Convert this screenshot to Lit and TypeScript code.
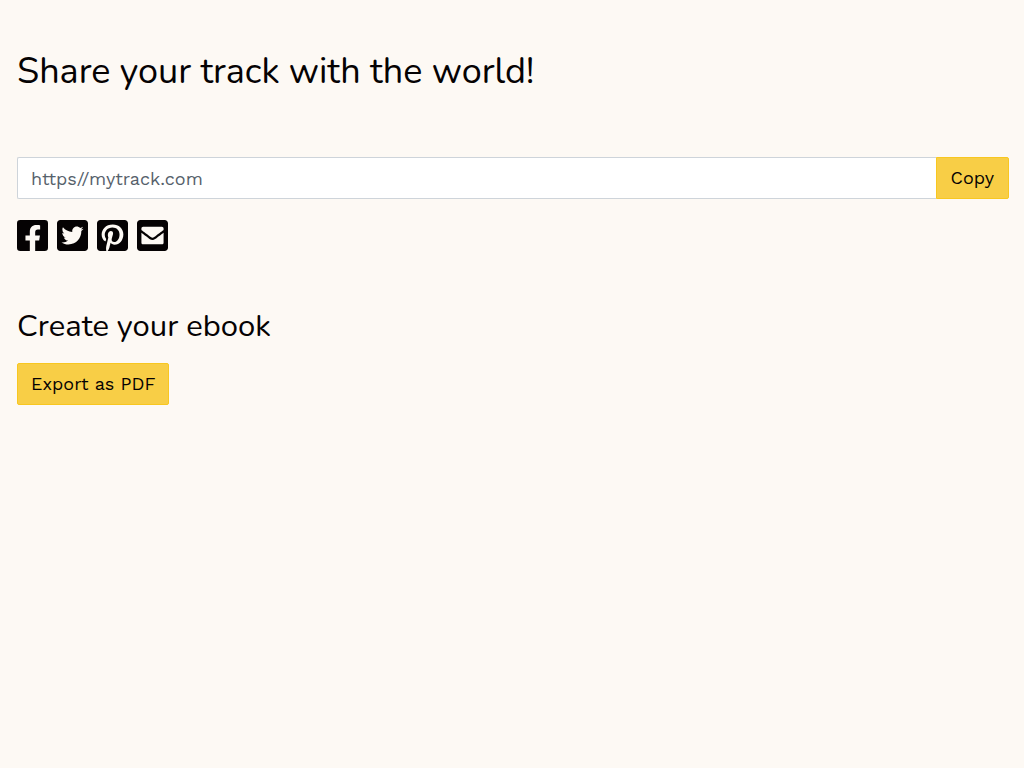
import { LitElement, html, css, svg } from "lit";
import { customElement, state } from "lit/decorators.js";

const icons = [
  {
    label: "Share on Facebook",
    path: "M400 32H48A48 48 0 0 0 0 80v352a48 48 0 0 0 48 48h137.25V327.69h-63V256h63v-54.64c0-62.15 37-96.48 93.67-96.48 27.14 0 55.52 4.84 55.52 4.84v61h-31.27c-30.81 0-40.42 19.12-40.42 38.73V256h68.78l-11 71.69h-57.78V480H400a48 48 0 0 0 48-48V80a48 48 0 0 0-48-48z",
  },
  {
    label: "Share on Twitter",
    path: "M400 32H48C21.5 32 0 53.5 0 80v352c0 26.5 21.5 48 48 48h352c26.5 0 48-21.5 48-48V80c0-26.5-21.5-48-48-48zm-48.9 158.8c.2 2.8.2 5.7.2 8.5 0 86.7-66 186.6-186.6 186.6-37.2 0-71.7-10.8-100.7-29.4 5.3.6 10.4.8 15.8.8 30.7 0 58.9-10.4 81.4-28-28.8-.6-53-19.5-61.3-45.5 10.1 1.5 19.2 1.5 29.6-1.2-30-6.1-52.5-32.5-52.5-64.4v-.8c8.7 4.9 18.9 7.9 29.6 8.3a65.447 65.447 0 0 1-29.2-54.6c0-12.2 3.2-23.4 8.9-33.1 32.3 39.8 80.8 65.8 135.2 68.6-9.3-44.5 24-80.6 64-80.6 18.9 0 35.9 7.9 47.9 20.7 14.8-2.8 29-8.3 41.6-15.8-4.9 15.2-15.2 28-28.8 36.1 13.2-1.4 26-5.1 37.8-10.2-8.9 13.1-20.1 24.7-32.9 34z",
  },
  {
    label: "Share on Pinterest",
    path: "M448 80v352c0 26.500-21.500 48-48 48H154.400c9.800-16.400 22.400-40 27.400-59.300 3-11.500 15.300-58.400 15.300-58.400 8 15.300 31.400 28.200 56.300 28.200 74.100 0 127.400-68.100 127.400-152.700 0-81.100-66.200-141.800-151.400-141.800-106 0-162.200 71.100-162.200 148.600 0 36 19.200 80.800 49.800 95.100 4.700 2.200 7.100 1.200 8.200-3.300.8-3.400 5-20.100 6.800-27.800.6-2.500.3-4.600-1.700-7-10.100-12.300-18.300-34.900-18.300-56 0-54.200 41-106.600 110.900-106.600 60.300 0 102.600 41.100 102.600 99.900 0 66.400-33.500 112.400-77.200 112.400-24.100 0-42.100-19.900-36.400-44.400 6.900-29.200 20.300-60.700 20.300-81.800 0-53-75.500-45.700-75.500 25 0 21.700 7.300 36.500 7.300 36.500-31.400 132.800-36.100 134.500-29.600 192.600l2.200.8H48c-26.500 0-48-21.500-48-48V80c0-26.500 21.500-48 48-48h352c26.500 0 48 21.500 48 48z",
  },
  {
    label: "Share by email",
    path: "M400 32H48C21.490 32 0 53.490 0 80v352c0 26.510 21.490 48 48 48h352c26.510 0 48-21.490 48-48V80c0-26.510-21.490-48-48-48zM178.117 262.104C87.429 196.287 88.353 196.121 64 177.167V152c0-13.255 10.745-24 24-24h272c13.255 0 24 10.745 24 24v25.167c-24.371 18.969-23.434 19.124-114.117 84.938-10.500 7.655-31.392 26.120-45.883 25.894-14.503.218-35.367-18.227-45.883-25.895zM384 217.775V360c0 13.255-10.745 24-24 24H88c-13.255 0-24-10.745-24-24V217.775c13.958 10.794 33.329 25.236 95.303 70.214 14.162 10.341 37.975 32.145 64.694 32.010 26.887.134 51.037-22.041 64.720-32.025 61.958-44.964 81.325-59.404 95.283-70.199z",
  },
];

@customElement("app-root")
export class AppRoot extends LitElement {
  @state() private url = "";

  static styles = css`
    :host {
      display: block;
      box-sizing: border-box;
      min-height: 100vh;
      padding: 50px 15px 50px 17px;
      background: #fdf9f4;
      color: #050203;
      font-family: "Work Sans", Inter, "Liberation Sans", sans-serif;
      font-size: 18px;
      line-height: 28px;
    }
    .title,
    .subtitle {
      margin: 0;
      font-family: Nunito, "Open Sans", sans-serif;
      font-weight: 400;
    }
    .title {
      font-size: 36px;
      line-height: 44px;
      margin-bottom: 63px;
    }
    .subtitle {
      font-size: 31px;
      line-height: 40px;
      margin: 55px 0 17px;
    }
    .group {
      display: flex;
    }
    .field,
    .button {
      box-sizing: border-box;
      height: 42px;
      margin: 0;
      padding: 6px 13px;
      border: 1px solid #ced4da;
      font: inherit;
    }
    .field {
      flex: 1;
      min-width: 0;
      border-right: 0;
      border-radius: 2px 0 0 2px;
      background: #fff;
      color: #495057;
    }
    .field::placeholder {
      color: #56616b;
      opacity: 1;
    }
    .button {
      border-color: #f8c720;
      border-radius: 2px;
      background: #f8ce46;
      color: #050203;
      cursor: pointer;
    }
    .copy {
      padding: 6px 14px;
      border-radius: 0 2px 2px 0;
    }
    .share {
      display: flex;
      gap: 9px;
      margin-top: 21px;
    }
    .link {
      display: block;
      color: inherit;
    }
    .icon {
      display: block;
      width: 31px;
      height: 31px;
      fill: currentColor;
    }
  `;

  private copy() {
    navigator.clipboard?.writeText(this.url);
  }

  render() {
    return html`
      <main>
        <h1 class="title">Share your track with the world!</h1>
        <div class="group">
          <input
            class="field"
            type="text"
            aria-label="Track link"
            placeholder="https//mytrack.com"
            .value=${this.url}
            @input=${(e: Event) => (this.url = (e.target as HTMLInputElement).value)}
          />
          <button class="button copy" type="button" @click=${this.copy}>Copy</button>
        </div>
        <nav class="share" aria-label="Share">
          ${icons.map(
            (i) => html`<a class="link" href="#" aria-label=${i.label}>
              <svg class="icon" viewBox="0 32 448 448" aria-hidden="true">${svg`<path d=${i.path}></path>`}</svg>
            </a>`
          )}
        </nav>
        <h2 class="subtitle">Create your ebook</h2>
        <button class="button" type="button">Export as PDF</button>
      </main>
    `;
  }
}
